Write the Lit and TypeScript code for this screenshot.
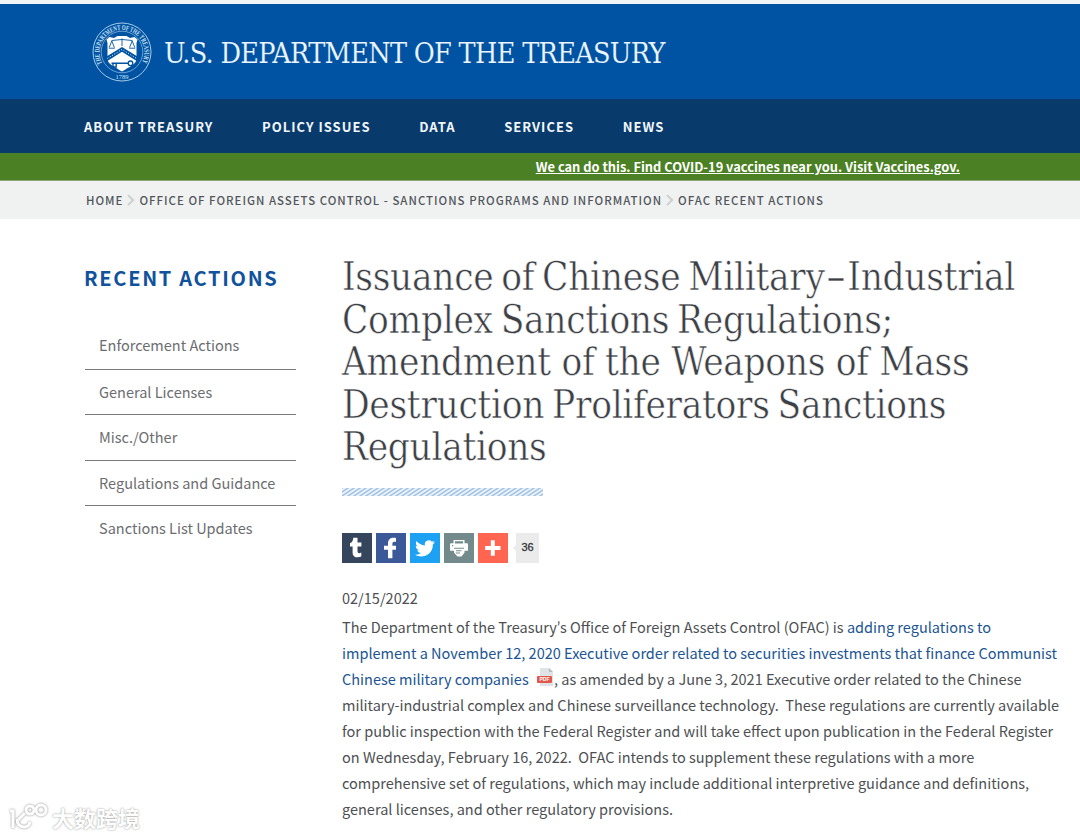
import { LitElement, html, css, svg } from 'lit';
import { customElement } from 'lit/decorators.js';

const NAV = ['About Treasury', 'Policy Issues', 'Data', 'Services', 'News'];

const CRUMBS = [
  'Home',
  'Office of Foreign Assets Control - Sanctions Programs and Information',
  'OFAC Recent Actions',
];

const SIDE = [
  'Enforcement Actions',
  'General Licenses',
  'Misc./Other',
  'Regulations and Guidance',
  'Sanctions List Updates',
];

const TITLE = [
  html`Issuance of Chinese Military<span class="hyphen">-</span>Industrial`,
  'Complex Sanctions Regulations;',
  'Amendment of the Weapons of Mass',
  'Destruction Proliferators Sanctions',
  'Regulations',
];

const SHARE = [
  {
    name: 'tumblr',
    icon: svg`<path d="M11.300 4.800h4.200v4.700h3.900v3.900h-3.900v4.900c0 2.200 1.700 2.300 3.800 1.300v4c-4.300 1.700-8.700.6-8.700-4.200v-6H8v-3.100c2.200-.8 3-2.800 3.300-5.500z"/>`,
  },
  {
    name: 'facebook',
    icon: svg`<path d="M12 25.200v-8.400H8v-4h4v-2.300c0-4.300 2.800-6.300 8-5.500v3.900c-2.400-.2-3.600.2-3.600 2v1.900H20v4h-3.600v8.400z"/>`,
  },
  {
    name: 'twitter',
    icon: svg`<path d="M25 9.200c-.7.3-1.500.6-2.300.7.8-.5 1.500-1.300 1.800-2.200-.8.5-1.700.8-2.600 1a4.100 4.100 0 0 0-7 3.700c-3.400-.2-6.400-1.800-8.400-4.300-1.100 1.900-.6 4.300 1.200 5.500-.7 0-1.300-.2-1.900-.5 0 2 1.400 3.700 3.300 4.100-.6.2-1.200.2-1.900.1.5 1.600 2 2.800 3.800 2.800A8.300 8.300 0 0 1 5 21.800c6.300 4 17.900 1.100 17.900-10.500.8-.6 1.500-1.300 2.100-2.100z"/>`,
  },
  {
    name: 'print',
    icon: svg`<path fill-rule="evenodd" d="M9.500 7h11v3.300h2.300c.7 0 1.200.5 1.200 1.200v6.300h-3.500v2l-3 3.700h-4l-3.500-3.700v-2H6v-6.300c0-.7.500-1.200 1.200-1.200h2.300zm1.400 1.300v2.200h8.200V8.300zM8 12v1.200h1.300V12zm2 2.800v1h10v-1zm2 2.500v1h5.500v-1zm0 2.200v1h4v-1z"/>`,
  },
  {
    name: 'more',
    icon: svg`<path d="M12.800 7.300h4v5.700h5.700v4h-5.700v5.700h-4V17H7.100v-4h5.700z"/>`,
  },
];

@customElement('treasury-seal')
export class TreasurySeal extends LitElement {
  static styles = css`
    :host {
      display: block;
      width: 60px;
      height: 60px;
    }

    svg {
      display: block;
    }

    text {
      font-family: 'Liberation Serif', serif;
      font-size: 7.2px;
      font-weight: 700;
      fill: #cfe5f8;
    }

    .year {
      font-size: 6.5px;
      font-weight: 400;
    }
  `;

  render() {
    return html`
      <svg width="60" height="60" viewBox="0 0 60 60" fill="none">
        <circle cx="30" cy="30" r="29" stroke="#a9cbea" stroke-width="1" />
        <circle cx="30" cy="30" r="20.800" stroke="#86b3dd" stroke-width=".8" />
        <path id="arc" d="M10.400 41.500A22.500 22.500 0 1 1 49.600 41.500" />
        <text textLength="92" lengthAdjust="spacingAndGlyphs"><textPath href="#arc" textLength="92" lengthAdjust="spacingAndGlyphs">THE DEPARTMENT OF THE TREASURY</textPath></text>
        <text class="year" x="30" y="56.900" text-anchor="middle">1789</text>
        <path d="M14.500 17.500l3-2.500 4.500 1 3.500-2h9l3.500 2 4.500-1 3 2.500-1 3.500v16c0 5-7.500 8-14.500 12.500-7-4.500-14.500-7.500-14.500-12.500V21z" fill="#fff" />
        <path d="M14.500 34.500L30 25l15.500 9.500v5L30 29.800 14.500 39.500z" fill="#0053a2" />
        <path d="M15.500 36.400L30 27.400l14.500 9" stroke="#fff" stroke-width="1" stroke-dasharray="1 1.700" />
        <path d="M30 16.500v7.500M19.500 18.500q10.500-2 21 0M19.800 19l-2.600 6.500M19.800 19l2.600 6.500M40.200 19l-2.600 6.500M40.200 19l2.600 6.500M16.800 26.200h6M37.200 26.200h6" stroke="#0053a2" stroke-width=".9" />
        <path d="M19.500 41.300h17M21 41.300v3.700h3.200v-3.700" stroke="#0053a2" stroke-width="1.400" />
        <circle cx="38.500" cy="41.300" r="2.300" stroke="#0053a2" stroke-width="1.300" />
      </svg>
    `;
  }
}

@customElement('share-bar')
export class ShareBar extends LitElement {
  static styles = css`
    :host {
      display: flex;
      gap: 4px;
    }

    .btn {
      width: 30px;
      height: 30px;
    }

    .btn svg {
      display: block;
      fill: #fff;
    }

    .tumblr { background: #35465c; }
    .facebook { background: #3b5998; }
    .twitter { background: #1da1f2; }
    .print { background: #738a8d; }
    .more { background: #ff6550; }

    .count {
      display: flex;
      align-items: center;
      margin-left: 1px;
    }

    .count::before {
      content: '';
      border: 3px solid transparent;
      border-left: 0;
      border-right-color: #ebebeb;
    }

    .num {
      width: 23px;
      height: 30px;
      background: #ebebeb;
      color: #32363b;
      font: 11px/29px 'Liberation Sans', Arial, sans-serif;
      text-align: center;
      -webkit-text-stroke: .3px #32363b;
    }
  `;

  render() {
    return html`
      ${SHARE.map(
        (s) => html`<div class="btn ${s.name}"><svg width="30" height="30" viewBox="0 0 30 30">${s.icon}</svg></div>`
      )}
      <div class="count"><div class="num">36</div></div>
    `;
  }
}

@customElement('app-root')
export class AppRoot extends LitElement {
  static styles = css`
    :host {
      display: block;
      position: relative;
      width: 1080px;
      height: 838px;
      overflow: hidden;
      background: #fff;
      color: #4d4f53;
      font-family: 'Noto Sans CJK SC', 'Source Sans Pro', sans-serif;
    }

    * {
      box-sizing: border-box;
    }

    .strip {
      height: 4px;
      background: #f1f4f5;
    }

    .brand {
      display: flex;
      align-items: center;
      gap: 12px;
      height: 95px;
      padding-left: 92px;
      background: #0053a2;
      color: #eaf5ff;
    }

    .brand-name {
      padding-top: 4px;
      font: 28.500px/40px 'DejaVu Serif Condensed', 'DejaVu Serif', serif;
      font-stretch: condensed;
      letter-spacing: -.7px;
      white-space: nowrap;
      -webkit-text-stroke: .1px #0053a2;
    }

    nav {
      display: flex;
      gap: 48.700px;
      height: 54px;
      padding-left: 84px;
      background: #083a6c;
      color: #f2f7fb;
      font-size: 13px;
      font-weight: 700;
      line-height: 56px;
      letter-spacing: 1px;
      text-transform: uppercase;
    }

    .alert {
      height: 28px;
      padding-right: 120px;
      border-bottom: 1px solid #8aa277;
      background: #4b8024;
      color: #fff;
      font-size: 12.850px;
      font-weight: 700;
      line-height: 27px;
      text-align: right;
      text-decoration: underline;
    }

    .crumbs {
      display: flex;
      height: 38px;
      padding-left: 86px;
      background: #f0f2f1;
      color: #52565c;
      font-size: 11.450px;
      font-weight: 500;
      line-height: 38px;
      letter-spacing: 1px;
      text-transform: uppercase;
      white-space: nowrap;
    }

    .crumb + .crumb {
      display: flex;
      align-items: center;
    }

    .crumb + .crumb::before {
      content: '';
      width: 5.500px;
      height: 5.500px;
      margin: 0 7px 0 1.500px;
      border: solid #cdd0d1;
      border-width: 2px 2px 0 0;
      transform: rotate(45deg);
    }

    .main {
      display: grid;
      grid-template-columns: 211px 1fr;
      column-gap: 46px;
      padding: 37px 0 0 85px;
    }

    h2 {
      margin: 5px 0 29px -1px;
      color: #10529c;
      font-size: 20px;
      font-weight: 700;
      line-height: 33px;
      letter-spacing: 1.700px;
      text-transform: uppercase;
    }

    .side-item {
      height: 45.500px;
      padding-left: 14px;
      color: #6b6d70;
      font-size: 14.530px;
      line-height: 44px;
    }

    .side-item + .side-item {
      border-top: 1px solid #77797b;
    }

    h1 {
      margin: 0;
      color: #3c4045;
      font: 38.400px/42.500px 'DejaVu Serif Condensed', 'DejaVu Serif', serif;
      font-stretch: condensed;
      letter-spacing: -.330px;
      word-spacing: -2.700px;
      white-space: nowrap;
      -webkit-text-stroke: .5px #fff;
    }

    h1 div:nth-child(3) {
      word-spacing: 0;
    }

    .hyphen {
      display: inline-block;
      margin: 0 5.700px;
      transform: scaleX(1.850);
    }

    .rule {
      display: block;
      margin: 19px 0 37px;
    }

    .date,
    .copy {
      margin: 0;
      font-size: 14.530px;
      line-height: 26.050px;
      white-space: nowrap;
    }

    .date {
      margin: 22px 0 3px;
    }

    .link {
      color: #205493;
    }

    .apos {
      font-family: Lato, sans-serif;
      line-height: 1;
    }

    .pdf {
      margin: 0 0 -1px 5px;
    }

    .mark {
      position: absolute;
      left: 8px;
      top: 799px;
      display: flex;
      align-items: center;
      color: #fff;
      font-size: 22px;
      font-weight: 700;
      line-height: 36px;
      text-shadow: 0 0 2px #888;
    }

    .mark svg {
      filter: drop-shadow(0 0 1px #888);
    }
  `;

  render() {
    return html`
      <div class="strip"></div>
      <div class="brand">
        <treasury-seal></treasury-seal>
        <div class="brand-name">U.S. DEPARTMENT OF THE TREASURY</div>
      </div>
      <nav>${NAV.map((n) => html`<span>${n}</span>`)}</nav>
      <div class="alert">We can do this. Find COVID-19 vaccines near you. Visit Vaccines.gov.</div>
      <div class="crumbs">${CRUMBS.map((c) => html`<span class="crumb">${c}</span>`)}</div>
      <div class="main">
        <aside>
          <h2>Recent Actions</h2>
          ${SIDE.map((s) => html`<div class="side-item">${s}</div>`)}
        </aside>
        <article>
          <h1>${TITLE.map((t) => html`<div>${t}</div>`)}</h1>
          <svg class="rule" width="201" height="8">
            <defs>
              <pattern id="hatch" width="6" height="4" patternUnits="userSpaceOnUse">
                <path d="M-6 4L6 -4M0 4L6 0M0 8L12 0" stroke="#a3c3e2" stroke-width="1.500" />
              </pattern>
            </defs>
            <rect width="201" height="8" fill="#edf4fb" />
            <rect width="201" height="8" fill="url(#hatch)" />
          </svg>
          <share-bar></share-bar>
          <p class="date">02/15/2022</p>
          <p class="copy">
            The Department of the Treasury<span class="apos">’</span>s Office of Foreign Assets Control (OFAC) is <span class="link">adding regulations to<br />
            implement a November 12, 2020 Executive order related to securities investments that finance Communist<br />
            Chinese military companies</span>
            <svg class="pdf" width="17" height="18" viewBox="0 0 17 18">
              <path d="M3 0h9l4 4v14H3z" fill="#dfe3e5" />
              <path d="M12 0l4 4h-4z" fill="#b4bcc0" />
              <rect y="8" width="15" height="7" rx="1" fill="#e2574c" />
              <text x="7.500" y="13.300" text-anchor="middle" font-family="Liberation Sans" font-size="5" font-weight="700" fill="#fff">PDF</text>
            </svg>, as amended by a June 3, 2021 Executive order related to the Chinese<br />
            military-industrial complex and Chinese surveillance technology.&nbsp; These regulations are currently available<br />
            for public inspection with the Federal Register and will take effect upon publication in the Federal Register<br />
            on Wednesday, February 16, 2022.&nbsp; OFAC intends to supplement these regulations with a more<br />
            comprehensive set of regulations, which may include additional interpretive guidance and definitions,<br />
            general licenses, and other regulatory provisions.
          </p>
        </article>
      </div>
      <div class="mark">
        <svg width="44" height="34" viewBox="0 0 44 34" fill="none" stroke="#fff" stroke-width="3">
          <path d="M2 11h3v17M17 13l-7 7M9 19c0 10 12 10 13 3" />
          <circle cx="22" cy="10" r="4" />
          <circle cx="33" cy="10" r="5" />
        </svg>
        <span>大数跨境</span>
      </div>
    `;
  }
}
